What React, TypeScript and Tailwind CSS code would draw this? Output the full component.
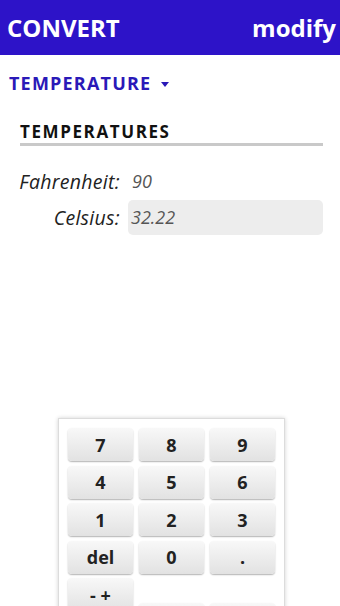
import React from "react"

const keys = [
  ["7", "8", "9"],
  ["4", "5", "6"],
  ["1", "2", "3"],
  ["del", "0", "."],
]

const Key = ({ label, className = "" }: { label: string; className?: string }) => (
  <button
    className={`h-[33px] w-full rounded-[4px] bg-gradient-to-b from-[#f8f8f8] to-[#e2e2e2] text-[18px] font-bold leading-none text-[#222] shadow-[0_1px_1.5px_rgba(0,0,0,0.3)] ${className}`}
  >
    {label}
  </button>
)

export default function App() {
  return (
    <div className="relative h-[606px] w-full overflow-hidden bg-white font-['Open_Sans',sans-serif]">
      {/* header */}
      <header className="flex h-[55px] items-center justify-between bg-[#2d13c8] pl-[7px] pr-[4px] text-white">
        <span className="text-[24px] font-bold leading-none">CONVERT</span>
        <span className="text-[24px] font-bold leading-none">modify</span>
      </header>

      {/* category dropdown */}
      <div className="mt-[19px] flex items-center pl-[9px] text-[#2a19b8]">
        <span className="text-[18px] font-bold leading-[18px] tracking-[1.2px]">TEMPERATURE</span>
        <svg className="ml-[10px] mt-[2px]" width="8" height="5" viewBox="0 0 8 5">
          <path d="M0 0h8L4 5z" fill="#2a19b8" />
        </svg>
      </div>

      {/* section */}
      <div className="mt-[31px] ml-[20px] mr-[17px]">
        <div className="border-b-[3px] border-[#c9c9c9] pb-[3px] text-[17px] font-bold leading-[17px] tracking-[1.6px] text-[#111]">
          TEMPERATURES
        </div>

        <div className="mt-[18px] grid grid-cols-[100px_1fr] gap-x-[8px] gap-y-[1px] text-[18px] italic">
          <div className="flex h-[35px] items-center justify-end text-[19.5px] tracking-[0.3px] text-[#222]">Fahrenheit:</div>
          <div className="flex h-[35px] items-center pl-[4px] text-[#555]">90</div>
          <div className="flex h-[35px] items-center justify-end text-[19.5px] tracking-[0.3px] text-[#222]">Celsius:</div>
          <div className="flex h-[35px] items-center rounded-[5px] bg-[#ededed] pl-[3px] text-[#555]">32.22</div>
        </div>
      </div>

      {/* keypad */}
      <div className="absolute left-[58px] top-[418px] w-[227px] border border-[#dcdcdc] bg-white px-[9px] pt-[9px] shadow-[0_0_4px_rgba(0,0,0,0.18)]">
        <div className="flex flex-col gap-[4.5px]">
          {keys.map((row, i) => (
            <div key={i} className="grid grid-cols-3 gap-x-[6px]">
              {row.map((k) => (
                <Key key={k} label={k} />
              ))}
            </div>
          ))}
          <div className="grid grid-cols-3 items-start gap-x-[6px]">
            <Key label="- +" />
            <Key label="" className="mt-[25px]" />
            <Key label="" className="mt-[25px]" />
          </div>
        </div>
      </div>
    </div>
  )
}
